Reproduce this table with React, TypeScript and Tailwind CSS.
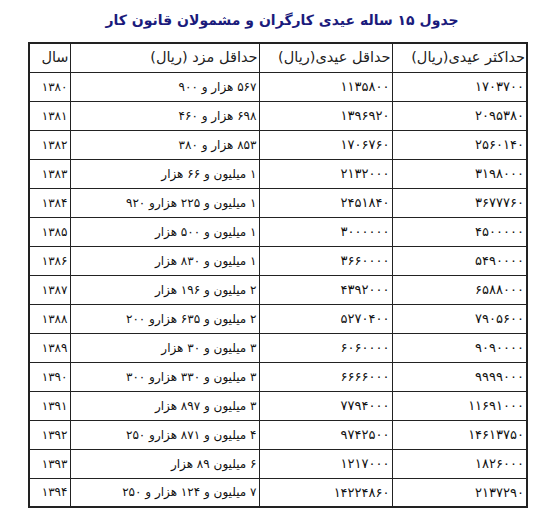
const rows: [string, string, string, string][] = [
  ['۱۳۸۰', '۵۶۷ هزار و ۹۰۰', '۱۱۳۵۸۰۰', '۱۷۰۳۷۰۰'],
  ['۱۳۸۱', '۶۹۸ هزار و ۴۶۰', '۱۳۹۶۹۲۰', '۲۰۹۵۳۸۰'],
  ['۱۳۸۲', '۸۵۳ هزار و ۳۸۰', '۱۷۰۶۷۶۰', '۲۵۶۰۱۴۰'],
  ['۱۳۸۳', '۱ میلیون و ۶۶ هزار', '۲۱۳۲۰۰۰', '۳۱۹۸۰۰۰'],
  ['۱۳۸۴', '۱ میلیون و ۲۲۵ هزارو ۹۲۰', '۲۴۵۱۸۴۰', '۳۶۷۷۷۶۰'],
  ['۱۳۸۵', '۱ میلیون و ۵۰۰ هزار', '۳۰۰۰۰۰۰', '۴۵۰۰۰۰۰'],
  ['۱۳۸۶', '۱ میلیون و ۸۳۰ هزار', '۳۶۶۰۰۰۰', '۵۴۹۰۰۰۰'],
  ['۱۳۸۷', '۲ میلیون و ۱۹۶ هزار', '۴۳۹۲۰۰۰', '۶۵۸۸۰۰۰'],
  ['۱۳۸۸', '۲ میلیون و ۶۳۵ هزارو ۲۰۰', '۵۲۷۰۴۰۰', '۷۹۰۵۶۰۰'],
  ['۱۳۸۹', '۳ میلیون و ۳۰ هزار', '۶۰۶۰۰۰۰', '۹۰۹۰۰۰۰'],
  ['۱۳۹۰', '۳ میلیون و ۳۳۰ هزارو ۳۰۰', '۶۶۶۶۰۰۰', '۹۹۹۹۰۰۰'],
  ['۱۳۹۱', '۳ میلیون و ۸۹۷ هزار', '۷۷۹۴۰۰۰', '۱۱۶۹۱۰۰۰'],
  ['۱۳۹۲', '۴ میلیون و ۸۷۱ هزارو ۲۵۰', '۹۷۴۲۵۰۰', '۱۴۶۱۳۷۵۰'],
  ['۱۳۹۳', '۶ میلیون ۸۹ هزار', '۱۲۱۷۰۰۰', '۱۸۲۶۰۰۰'],
  ['۱۳۹۴', '۷ میلیون و ۱۲۴ هزار و ۲۵۰', '۱۴۲۲۴۸۶۰', '۲۱۳۷۲۹۰'],
]

const cell = 'border border-[#222] px-[2px] py-0 text-right align-middle'
const num = `${cell} text-[13px]`
const head = 'border border-[#222] px-[1px] py-0 text-right align-middle font-normal text-[14.5px] text-[#222]'

export default function App() {
  return (
    <div
      dir="rtl"
      className="w-[550px] h-[518px] bg-white pt-[9px]"
      style={{ fontFamily: '"DejaVu Sans", sans-serif' }}
    >
      {/* Title */}
      <h1 className="w-[550px] text-center text-[14px] font-bold leading-[22px] text-[#1b1b7c] pl-[14px]">
        جدول ۱۵ ساله عیدی کارگران و مشمولان قانون کار
      </h1>

      {/* Table */}
      <table className="mt-[11px] mr-[22px] w-[498px] border-collapse border-2 border-[#222] text-[12px] text-[#111] table-fixed">
        <colgroup>
          <col className="w-[135px]" />
          <col className="w-[133px]" />
          <col className="w-[189px]" />
          <col className="w-[41px]" />
        </colgroup>
        <thead>
          <tr className="h-[29px]">
            <th className={head}>حداکثر عیدی(ریال)</th>
            <th className={head}>حداقل عیدی(ریال)</th>
            <th className={head}>حداقل مزد (ریال)</th>
            <th className={head}>سال</th>
          </tr>
        </thead>
        <tbody>
          {rows.map(([year, wage, minEidi, maxEidi]) => (
            <tr key={year} className="h-[29px]">
              <td className={num}>{maxEidi}</td>
              <td className={num}>{minEidi}</td>
              <td className={cell}>{wage}</td>
              <td className={cell}>{year}</td>
            </tr>
          ))}
        </tbody>
      </table>
    </div>
  )
}
